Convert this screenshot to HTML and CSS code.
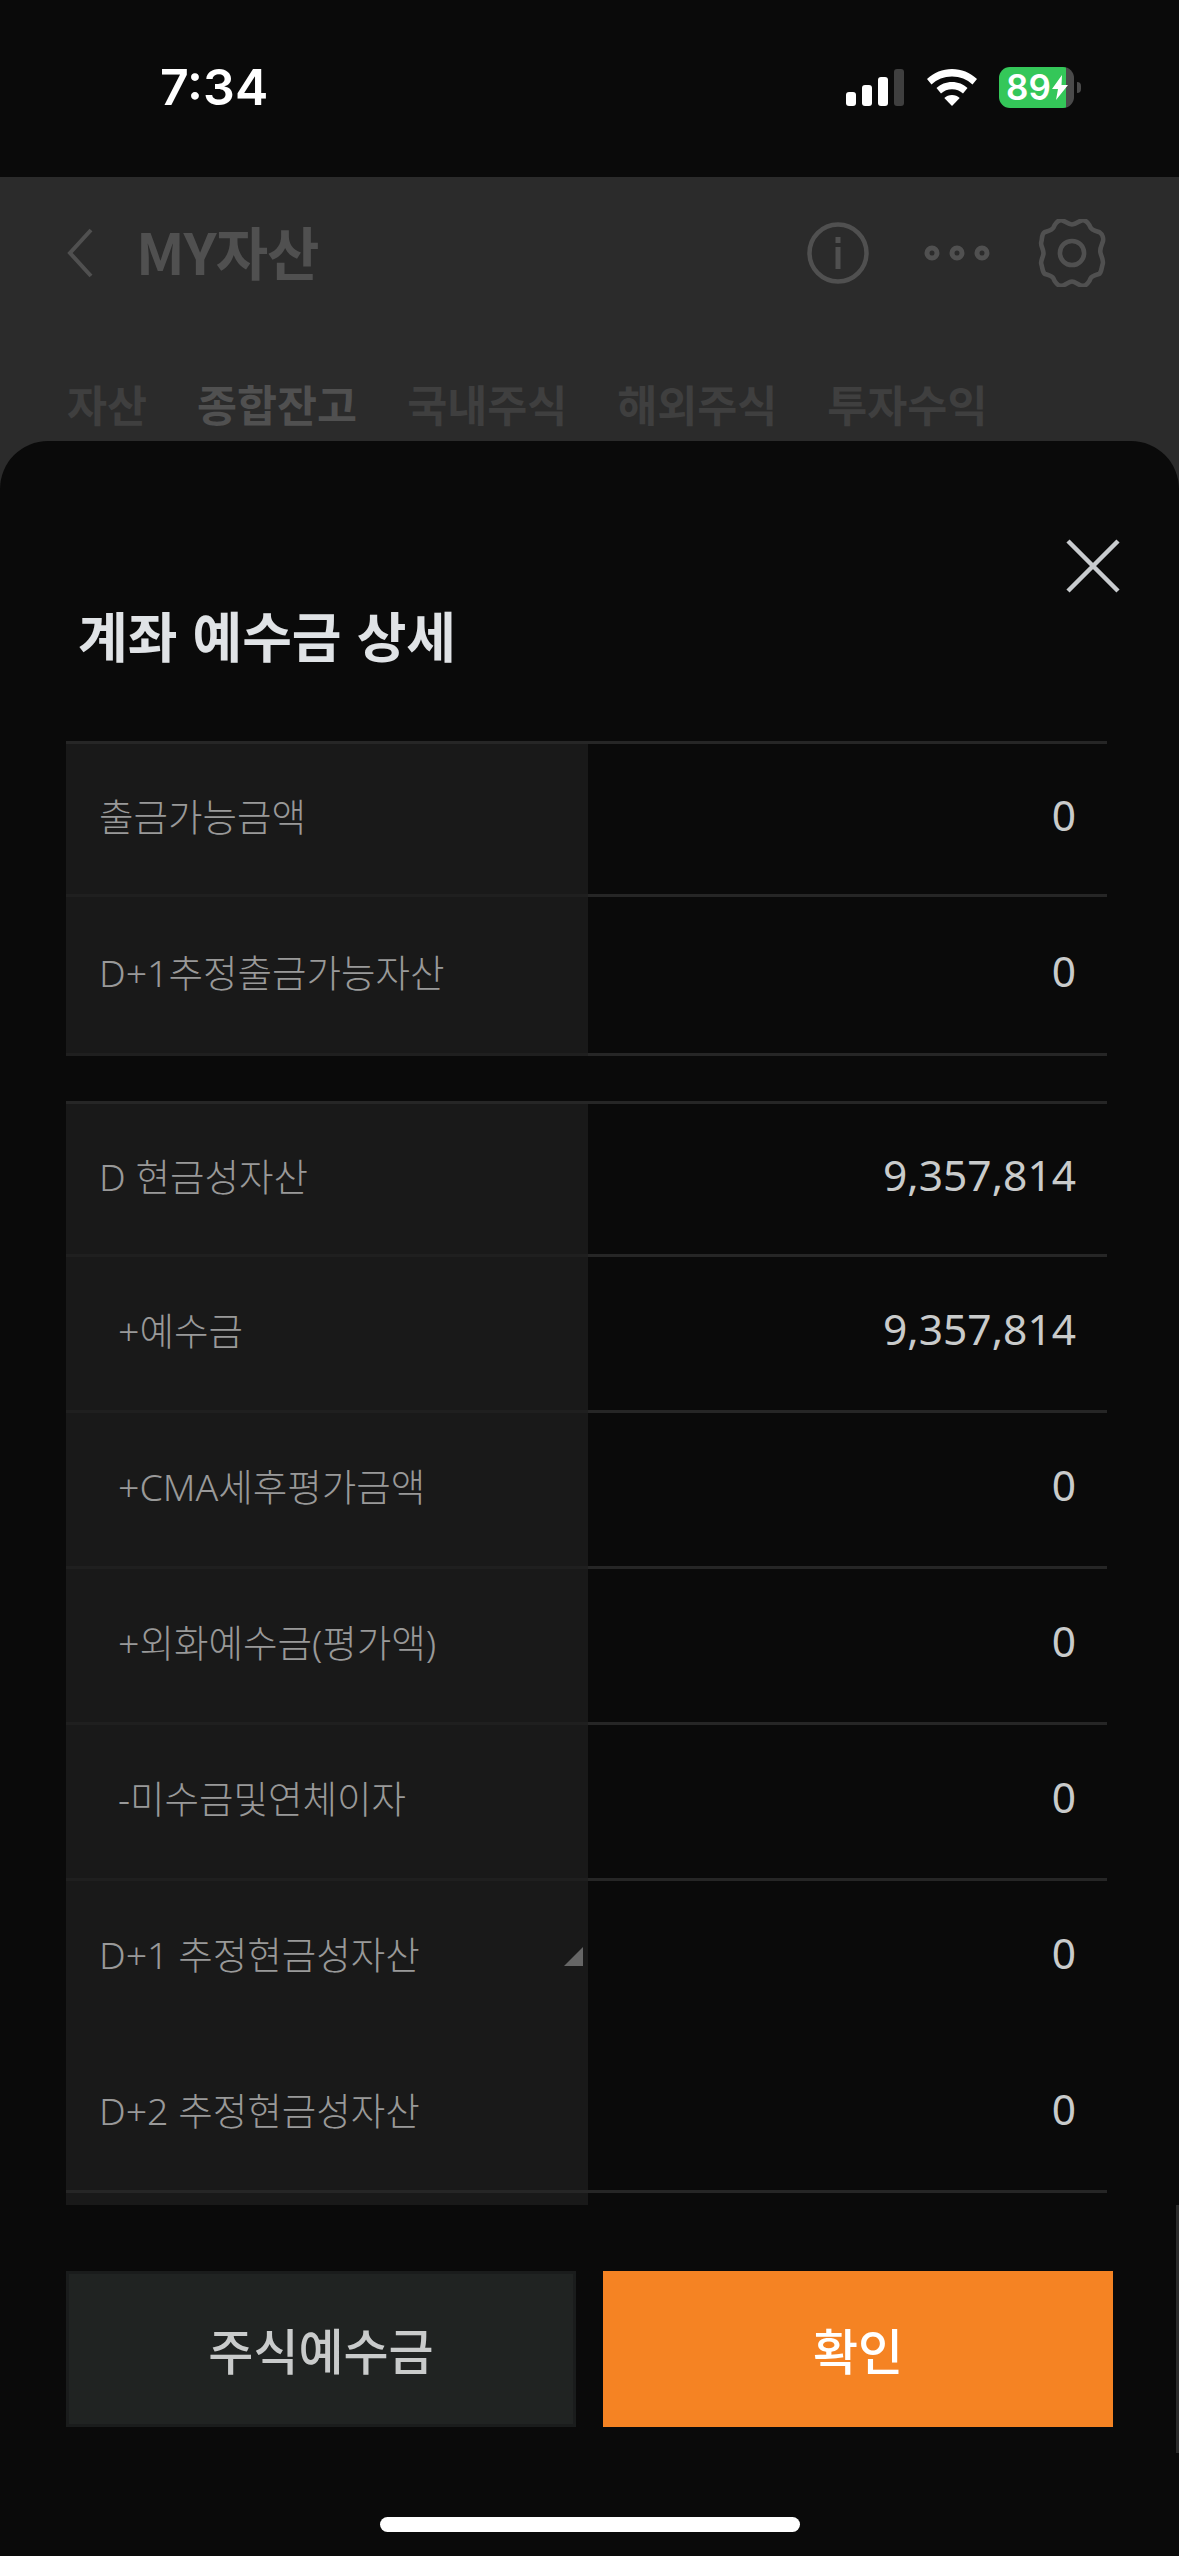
FILE: index.html
```html
<!DOCTYPE html>
<html lang="ko">
<head>
<meta charset="UTF-8" />
<meta name="viewport" content="width=device-width, initial-scale=1" />
<title>계좌 예수금 상세</title>
<link rel="stylesheet" href="styles.css">
</head>
<body>
  <div class="status-bar">
    <div class="time">7:34</div>
    <div class="status-icons">
      <svg class="signal" width="58" height="37" viewBox="0 0 58 37">
        <rect x="0" y="23" width="10" height="14" rx="3" fill="#fff"/>
        <rect x="16" y="16" width="10" height="21" rx="3" fill="#fff"/>
        <rect x="32" y="8" width="10" height="29" rx="3" fill="#fff"/>
        <rect x="48" y="0" width="10" height="37" rx="3" fill="#3f3f3f"/>
      </svg>
      <svg class="wifi" width="50" height="37" viewBox="0 0 50 37">
        <path d="M25 0C15.500 0 7 3.500 0 10l4.500 5.500C10 10.200 17 7.500 25 7.500s15 2.700 20.500 8L50 10C43 3.500 34.500 0 25 0z" fill="#fff"/>
        <path d="M25 13c-6 0-11.500 2.300-15.500 6l4.500 5.500c3-2.700 6.800-4.200 11-4.200s8 1.500 11 4.200l4.500-5.500C36.500 15.300 31 13 25 13z" fill="#fff"/>
        <path d="M25 26c-3 0-5.700 1.100-7.700 3L25 37l7.700-8c-2-1.900-4.700-3-7.700-3z" fill="#fff"/>
      </svg>
      <div class="battery">
        <div class="battery-body">
          <span class="battery-num">89</span>
          <svg class="bolt" width="16" height="25" viewBox="0 0 16 25">
            <path d="M10 0L0 14h6l-2 11L16 10H9.500z" fill="#fff"/>
          </svg>
        </div>
        <div class="battery-nub"></div>
      </div>
    </div>
  </div>

  <div class="dim-header">
    <div class="nav">
      <svg class="back" width="26" height="50" viewBox="0 0 26 50">
        <path d="M24 2L3 25l21 23" fill="none" stroke="#505050" stroke-width="4"/>
      </svg>
      <div class="nav-title">MY자산</div>
      <svg class="nav-info" width="62" height="62" viewBox="0 0 62 62">
        <circle cx="31" cy="31" r="28.500" fill="none" stroke="#505050" stroke-width="4.500"/>
        <rect x="28.500" y="15" width="5" height="6" fill="#505050"/>
        <rect x="28.500" y="25" width="5" height="22" fill="#505050"/>
      </svg>
      <svg class="nav-more" width="66" height="16" viewBox="0 0 66 16">
        <circle cx="8" cy="8" r="5" fill="none" stroke="#505050" stroke-width="5"/>
        <circle cx="33" cy="8" r="5" fill="none" stroke="#505050" stroke-width="5"/>
        <circle cx="58" cy="8" r="5" fill="none" stroke="#505050" stroke-width="5"/>
      </svg>
      <svg class="nav-gear" width="68" height="68" viewBox="3 3 62 62">
        <path d="M24 4c3 0 6 4 10 4s7-4 10-4c3 0 6 4 7 7 1 2 5 3 8 4 3 2 4 6 3 9-1 3-3 6-2 10s3 7 2 10c-1 3-1 7-3 9-3 1-7 2-8 4-1 3-4 7-7 7s-7-4-10-4-7 4-10 4-6-4-7-7c-1-2-5-3-8-4-2-2-2-6-3-9-1-3 2-6 2-10s-3-7-2-10c1-3 0-7 3-9 3-1 7-2 8-4 1-3 4-7 7-7z" fill="none" stroke="#505050" stroke-width="4.200" stroke-linejoin="round"/>
        <circle cx="34" cy="34" r="11" fill="none" stroke="#505050" stroke-width="4.200"/>
      </svg>
    </div>
    <div class="tabs">
      <span class="tab">자산</span>
      <span class="tab active">종합잔고</span>
      <span class="tab">국내주식</span>
      <span class="tab">해외주식</span>
      <span class="tab">투자수익</span>
    </div>
  </div>

  <div class="sheet">
    <div class="sheet-close">
      <svg width="54" height="54" viewBox="0 0 54 54">
        <path d="M2 2l50 50M52 2L2 52" fill="none" stroke="#c9cccf" stroke-width="4.500"/>
      </svg>
    </div>
    <h2 class="sheet-title">계좌 예수금 상세</h2>

    <div class="table first">
      <div class="row"><div class="label">출금가능금액</div><div class="value">0</div></div>
      <div class="row tall"><div class="label">D+1추정출금가능자산</div><div class="value">0</div></div>
    </div>

    <div class="table second">
      <div class="row"><div class="label">D 현금성자산</div><div class="value">9,357,814</div></div>
      <div class="row"><div class="label sub">+예수금</div><div class="value">9,357,814</div></div>
      <div class="row"><div class="label sub">+CMA세후평가금액</div><div class="value">0</div></div>
      <div class="row"><div class="label sub">+외화예수금(평가액)</div><div class="value">0</div></div>
      <div class="row"><div class="label sub">-미수금및연체이자</div><div class="value">0</div></div>
      <div class="row"><div class="label">D+1 추정현금성자산<i class="corner-mark"></i></div><div class="value">0</div></div>
      <div class="row no-line"><div class="label">D+2 추정현금성자산</div><div class="value">0</div></div>
      <div class="row-tail"></div>
    </div>

    <div class="buttons">
      <div class="btn btn-dark">주식예수금</div>
      <div class="btn btn-orange">확인</div>
    </div>
    <div class="home-bar"></div>
    <div class="scroll-thumb"></div>
  </div>
</body>
</html>
```

FILE: styles.css
```css
* {
  box-sizing: border-box;
}
html, body {
  margin: 0;
  padding: 0;
}
body {
  width: 1179px;
  height: 2556px;
  overflow: hidden;
  background: #2b2b2b;
  font-family: "Noto Sans CJK KR", "Noto Sans", sans-serif;
}

/* status bar */
.status-bar {
  height: 177px;
  background: #0a0a0a;
  display: flex;
  justify-content: space-between;
  padding: 67px 98px 0 160px;
}
.time {
  font-family: Inter, sans-serif;
  font-weight: 600;
  font-size: 50px;
  line-height: 41px;
  color: #fff;
}
.status-icons {
  display: flex;
  align-items: flex-start;
}
.signal {
  margin: 2px 23px 0 0;
}
.wifi {
  margin: 2px 22px 0 0;
}
.battery {
  display: flex;
  align-items: center;
}
.battery-body {
  width: 75px;
  height: 41px;
  border-radius: 11px;
  background: linear-gradient(90deg, #34c759 67px, #4a4a4a 67px);
  display: flex;
  align-items: center;
  padding-left: 7px;
}
.battery-num {
  width: 46px;
  font-family: Inter, sans-serif;
  font-weight: 600;
  font-size: 35px;
  line-height: 41px;
  color: #fff;
}
.bolt {
  flex-shrink: 0;
}
.battery-nub {
  width: 4px;
  height: 11px;
  margin-left: 3px;
  border-radius: 0 6px 6px 0;
  background: #4a4a4a;
}

/* dimmed page behind sheet */
.dim-header {
  height: 264px;
  background: #2b2b2b;
}
.nav {
  display: flex;
  align-items: center;
  height: 152px;
  padding-left: 67px;
}
.nav-title {
  margin: -6px 0 0 43px;
  font-size: 57px;
  font-weight: 700;
  color: #505050;
  letter-spacing: -1px;
  flex: 1;
}
.nav-info {
  margin-right: 55px;
}
.nav-more {
  margin-right: 48px;
}
.nav-gear {
  margin-right: 73px;
}
.tabs {
  display: flex;
  gap: 50px;
  padding: 45px 0 0 67px;
}
.tab {
  font-size: 43.500px;
  line-height: 60px;
  font-weight: 700;
  color: #3f3f3f;
}
.tab.active {
  color: #505050;
}

/* bottom sheet */
.sheet {
  position: relative;
  height: 2115px;
  background: #0a0a0a;
  border-radius: 48px 48px 0 0;
  padding: 0 0 0 66px;
}
.sheet-close {
  display: flex;
  justify-content: flex-end;
  padding: 98px 59px 0 0;
  height: 160px;
}
.sheet-title {
  margin: 0 0 0 12px;
  height: 140px;
  font-size: 54px;
  line-height: 68px;
  font-weight: 700;
  color: #e0e3e6;
}
.table {
  width: 1041px;
}
.table.second {
  margin-top: 48px;
}
.row {
  display: grid;
  grid-template-columns: 522px 1fr;
  height: 156px;
}
.row:first-child {
  height: 153px;
}
.first .row.tall {
  height: 159px;
}
.label {
  position: relative;
  display: flex;
  align-items: center;
  background: #191919;
  padding: 0 0 10px 33px;
  font-family: "Noto Sans", "Noto Sans CJK KR", sans-serif;
  font-size: 37.500px;
  font-weight: 300;
  color: #999;
  border-top: 3px solid #1f1f1f;
}
.label.sub {
  padding-left: 52px;
}
.value {
  display: flex;
  align-items: center;
  justify-content: flex-end;
  padding: 0 31px 10px 0;
  font-family: "Noto Sans", sans-serif;
  font-size: 42.500px;
  color: #c9cbcb;
  border-top: 3px solid #262626;
}
.row:first-child .label,
.row:first-child .value {
  border-top-color: #262626;
}
.row.no-line .label,
.row.no-line .value {
  border-top-color: transparent;
}
.first .row.tall .label {
  box-shadow: 0 3px 0 #1f1f1f;
}
.first .row.tall .value {
  box-shadow: 0 3px 0 #262626;
}
.corner-mark {
  position: absolute;
  right: 5px;
  top: 66px;
  width: 19px;
  height: 19px;
  background: #666;
  clip-path: polygon(100% 0, 100% 100%, 0 100%);
}
.row-tail {
  height: 15px;
  border-top: 3px solid #262626;
  background: linear-gradient(90deg, #191919 522px, transparent 522px);
}
.buttons {
  display: flex;
  gap: 27px;
  margin-top: 66px;
}
.btn {
  display: flex;
  align-items: center;
  justify-content: center;
  width: 510px;
  height: 156px;
  padding-bottom: 2px;
  font-size: 49px;
  font-weight: 500;
}
.btn-dark {
  background: #202322;
  border: 3px solid #1a1c1c;
  color: #c9cbcb;
}
.btn-orange {
  background: #f58323;
  color: #fff;
}
.home-bar {
  position: absolute;
  left: 380px;
  top: 2076px;
  width: 420px;
  height: 15px;
  border-radius: 8px;
  background: #fff;
}
.scroll-thumb {
  position: absolute;
  right: 0;
  top: 1764px;
  width: 3px;
  height: 248px;
  background: #2b2b2b;
}
```
